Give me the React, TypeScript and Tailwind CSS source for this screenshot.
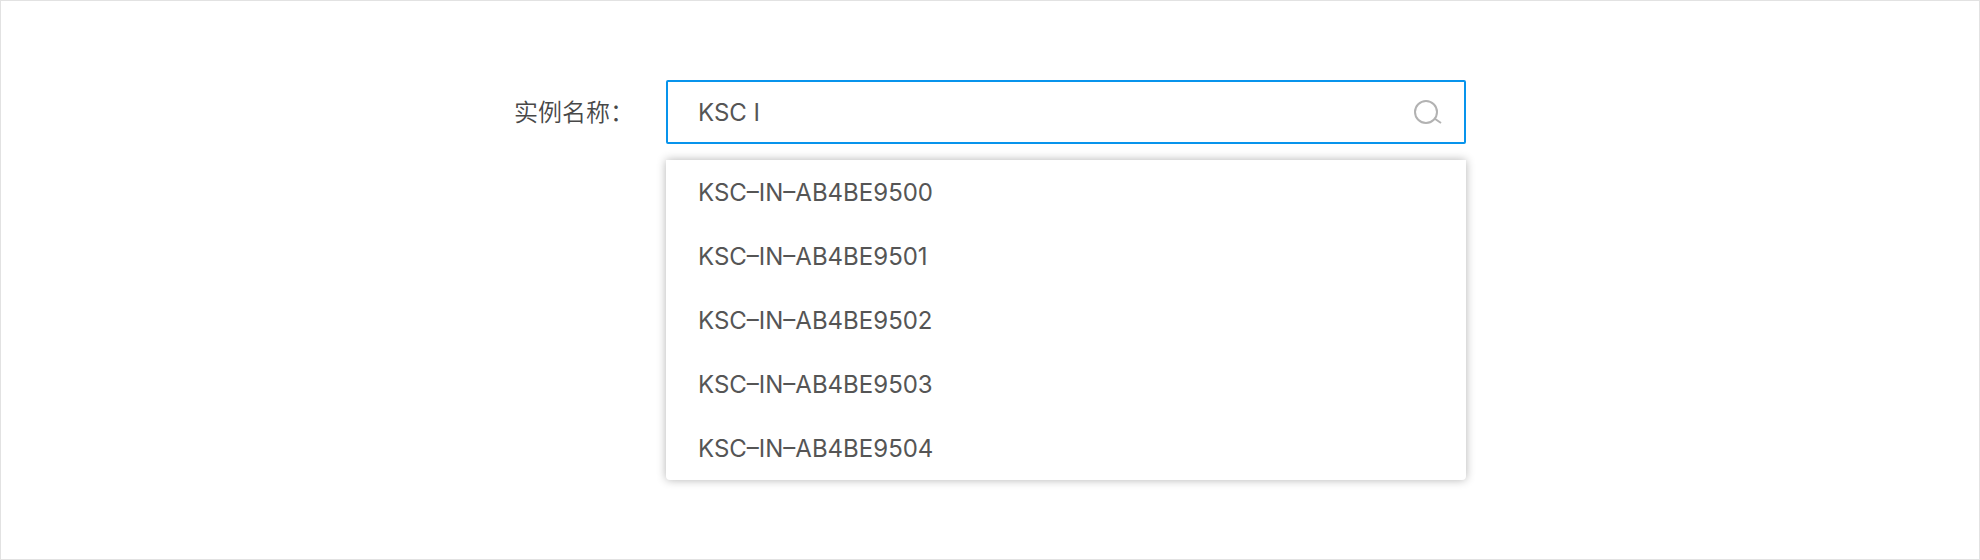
import React, { useState } from "react";

const instances = [
  "KSC–IN–AB4BE9500",
  "KSC–IN–AB4BE9501",
  "KSC–IN–AB4BE9502",
  "KSC–IN–AB4BE9503",
  "KSC–IN–AB4BE9504",
];

export default function App() {
  const [query, setQuery] = useState("KSC I");
  return (
    <main className="min-h-screen border border-[#e2e2e2] bg-white px-4 pt-[79px] pb-16 font-['Inter','Noto_Sans_CJK_SC',sans-serif] text-2xl font-normal text-[#555555]">
      <div className="mx-auto flex w-full max-w-[952px] items-start">
        <label htmlFor="instance" className="flex h-16 w-[152px] shrink-0 items-center pb-0.5 whitespace-nowrap font-['Noto_Sans_CJK_SC',sans-serif] font-[350] text-[#484848]">
          实例名称：
        </label>
        <div className="min-w-0 flex-1">
          <div className="flex h-16 items-center rounded-xs border-2 border-[#0894ec] pr-[22px] pl-[30px]">
            <input
              id="instance"
              type="text"
              autoComplete="off"
              value={query}
              onChange={(e) => setQuery(e.target.value)}
              className="min-w-0 flex-1 bg-transparent pt-0.5 outline-none"
            />
            <button type="button" aria-label="搜索" className="shrink-0 text-[#b2b2b2]">
              <svg viewBox="0 0 28 28" fill="none" stroke="currentColor" strokeWidth="2" className="size-7">
                <circle cx="12" cy="14" r="11" />
                <path d="M20.5 20.5l6.5 4.5" />
              </svg>
            </button>
          </div>
          <ul className="mt-4 rounded-b-sm bg-white shadow-[0_0_10px_rgba(0,0,0,0.3)]">
            {instances.map((name) => (
              <li key={name}>
                <button type="button" onClick={() => setQuery(name)} className="block h-16 w-full px-8 pt-0.5 text-left">
                  {name}
                </button>
              </li>
            ))}
          </ul>
        </div>
      </div>
    </main>
  );
}
